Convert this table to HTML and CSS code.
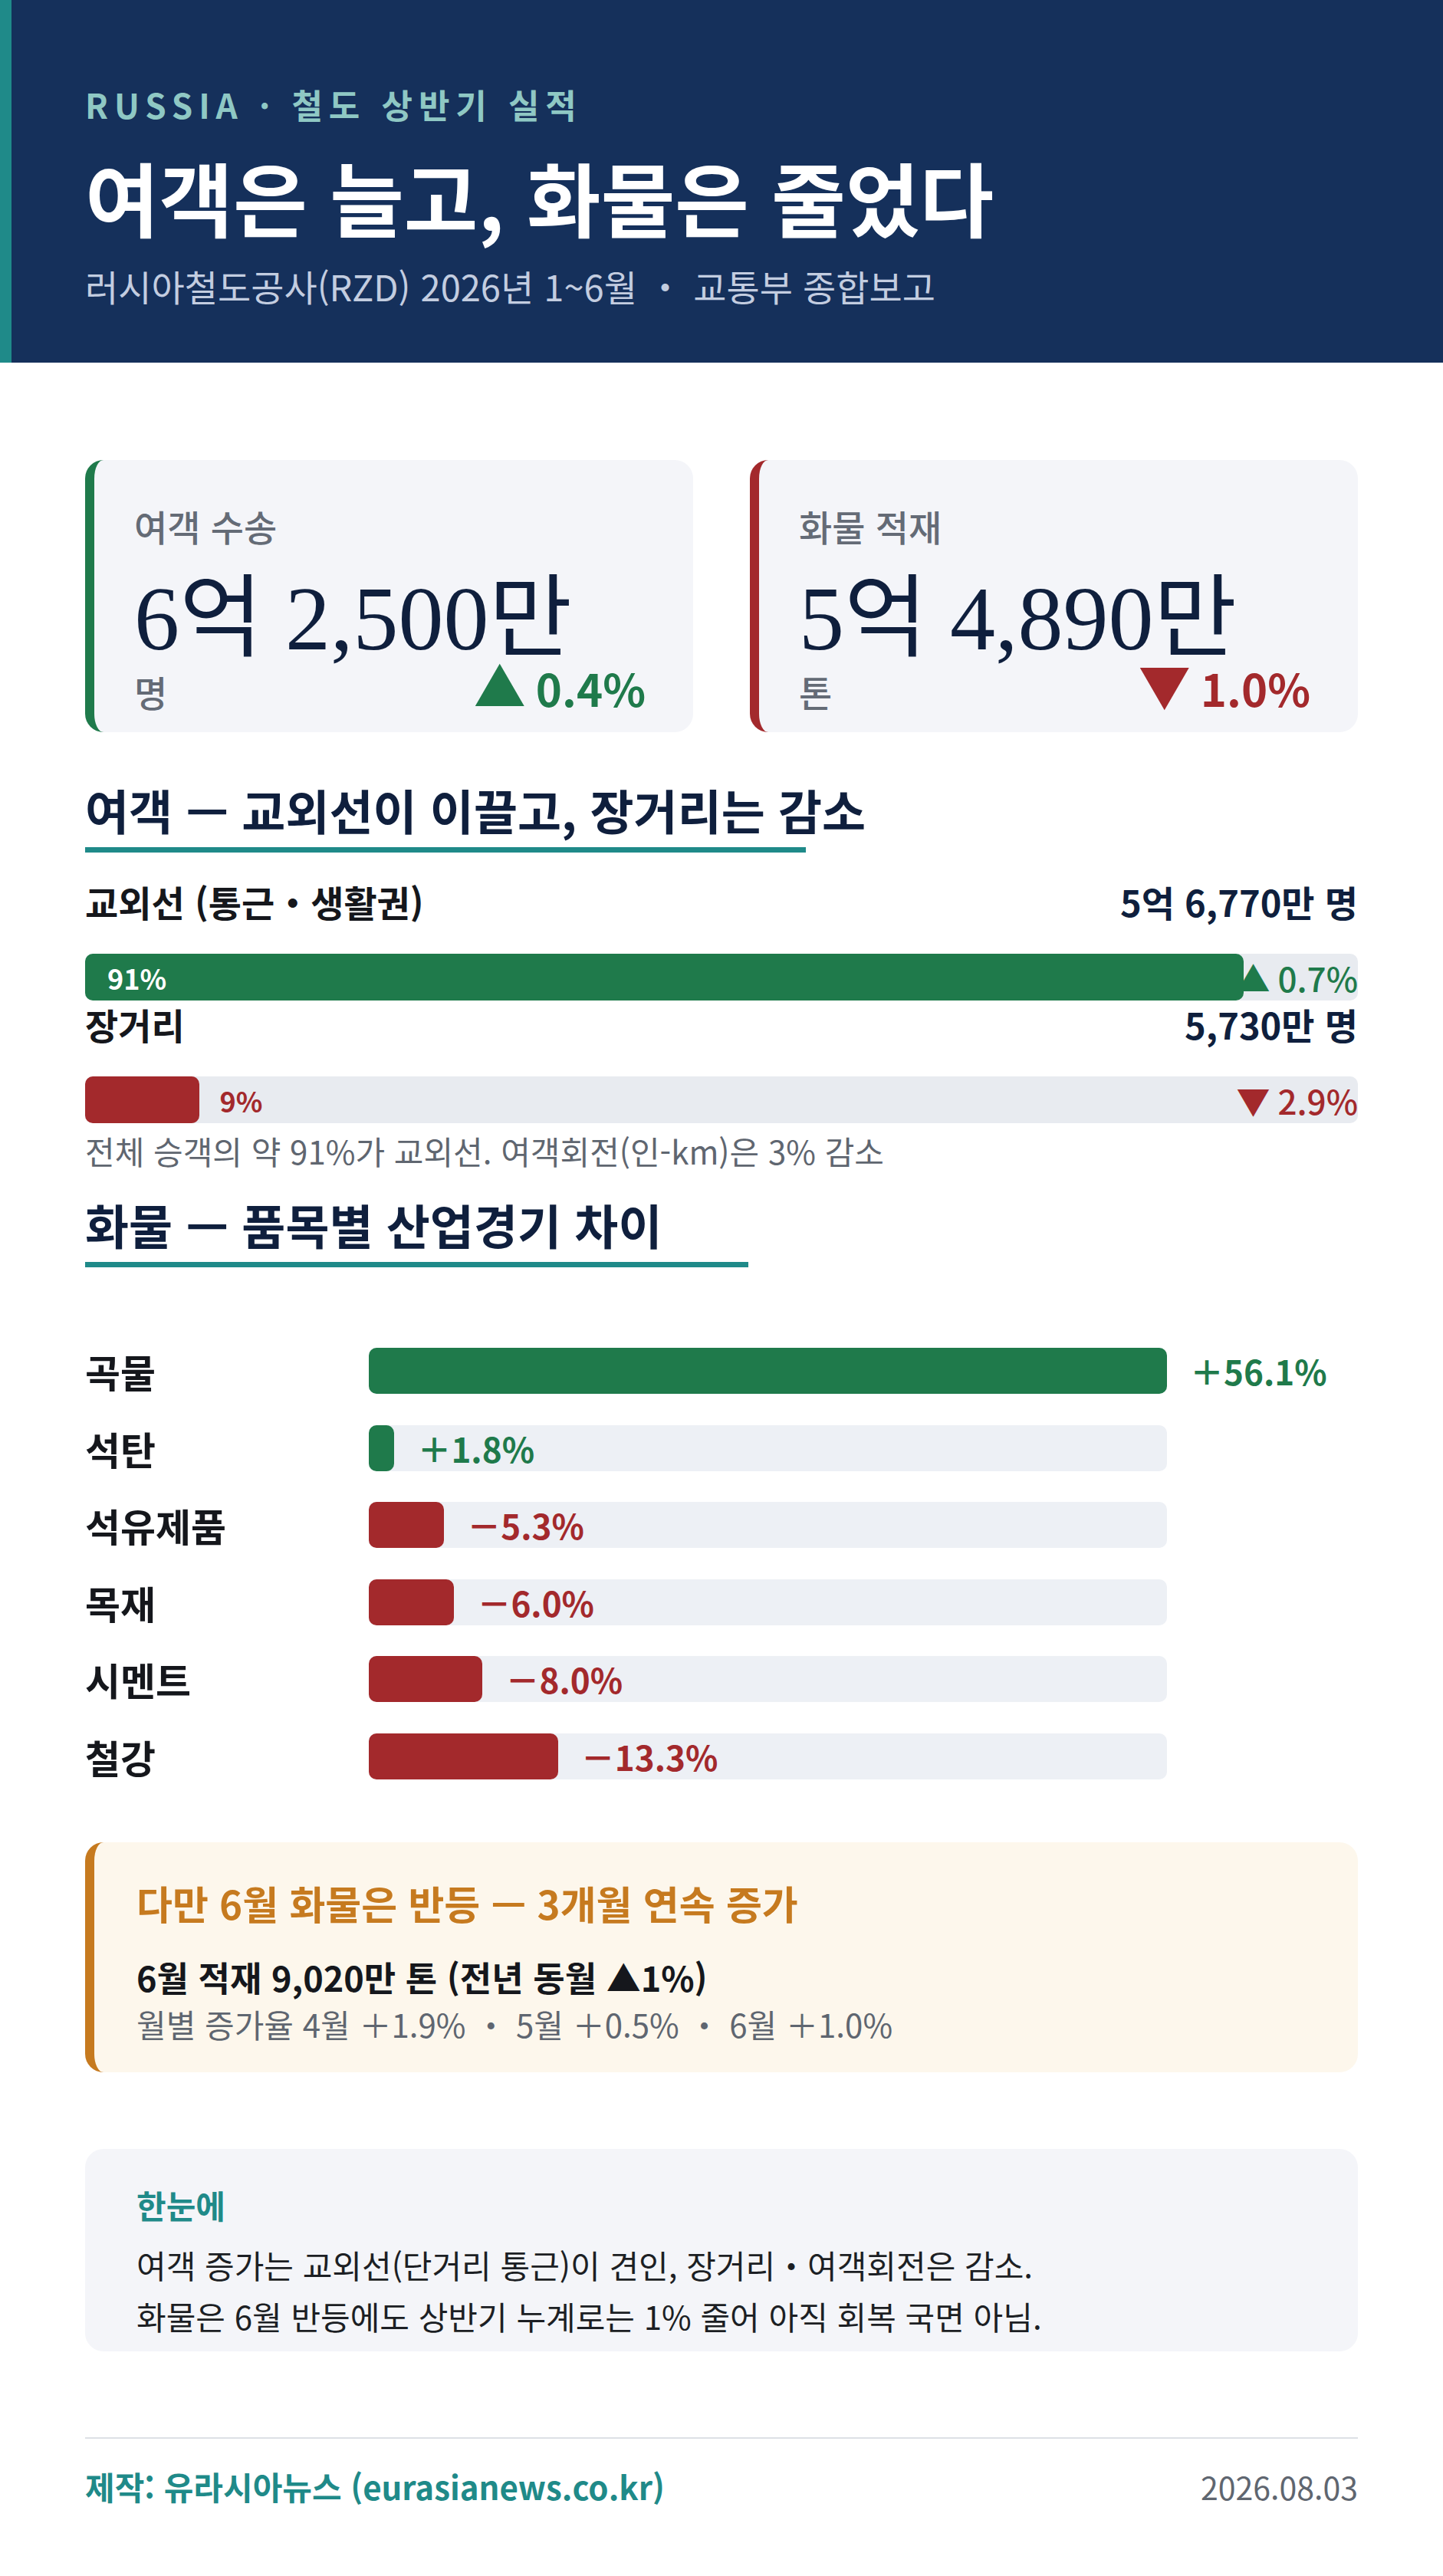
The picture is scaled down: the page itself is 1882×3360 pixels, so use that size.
FILE: index.html
```html
<!DOCTYPE html>
<html lang="ko">
<head>
<meta charset="utf-8">
<title>러시아 철도 상반기 실적</title>
<link rel="stylesheet" href="styles.css">
</head>
<body>
<header class="hero">
  <p class="kicker">RUSSIA · 철도 상반기 실적</p>
  <h1 class="title">여객은 늘고, 화물은 줄었다</h1>
  <p class="subtitle">러시아철도공사(RZD) 2026년 1~6월 <span class="fw">·</span> 교통부 종합보고</p>
</header>

<main class="content">
  <section class="kpis">
    <div class="kpi kpi--up">
      <div class="kpi-label">여객 수송</div>
      <div class="kpi-value">6억 2,500만</div>
      <div class="kpi-foot">
        <span class="kpi-unit">명</span>
        <span class="kpi-change up"><span class="tri">▲</span> 0.4%</span>
      </div>
    </div>
    <div class="kpi kpi--down">
      <div class="kpi-label">화물 적재</div>
      <div class="kpi-value">5억 4,890만</div>
      <div class="kpi-foot">
        <span class="kpi-unit">톤</span>
        <span class="kpi-change down"><span class="tri">▼</span> 1.0%</span>
      </div>
    </div>
  </section>

  <section class="passenger">
    <h2 class="sec-title sec-title--a">여객 — 교외선이 이끌고, 장거리는 감소</h2>
    <div class="share-list">
      <div class="share-row">
        <div class="share-head">
          <span class="share-name">교외선 (통근<span class="fw">·</span>생활권)</span>
          <span class="share-val">5억 6,770만 명</span>
        </div>
        <div class="share-track">
          <div class="share-fill up" style="width:91%"><span class="share-pct-in">91%</span></div>
          <span class="share-chg up">▲ 0.7%</span>
        </div>
      </div>
      <div class="share-row">
        <div class="share-head">
          <span class="share-name">장거리</span>
          <span class="share-val">5,730만 명</span>
        </div>
        <div class="share-track">
          <div class="share-fill down" style="width:9%"></div>
          <span class="share-pct-out">9%</span>
          <span class="share-chg down">▼ 2.9%</span>
        </div>
      </div>
    </div>
    <p class="note">전체 승객의 약 91%가 교외선. 여객회전(인-km)은 3% 감소</p>
  </section>

  <section class="freight-sec">
    <h2 class="sec-title sec-title--b">화물 — 품목별 산업경기 차이</h2>
    <div class="freight">
      <div class="f-label">곡물</div>
      <div class="f-track"><div class="f-fill up" style="width:100%"></div><span class="f-val up"><span class="fw">+</span>56.1%</span></div>

      <div class="f-label">석탄</div>
      <div class="f-track"><div class="f-fill up" style="width:3.21%"></div><span class="f-val up"><span class="fw">+</span>1.8%</span></div>

      <div class="f-label">석유제품</div>
      <div class="f-track"><div class="f-fill down" style="width:9.45%"></div><span class="f-val down"><span class="fw">－</span>5.3%</span></div>

      <div class="f-label">목재</div>
      <div class="f-track"><div class="f-fill down" style="width:10.7%"></div><span class="f-val down"><span class="fw">－</span>6.0%</span></div>

      <div class="f-label">시멘트</div>
      <div class="f-track"><div class="f-fill down" style="width:14.26%"></div><span class="f-val down"><span class="fw">－</span>8.0%</span></div>

      <div class="f-label">철강</div>
      <div class="f-track"><div class="f-fill down" style="width:23.71%"></div><span class="f-val down"><span class="fw">－</span>13.3%</span></div>
    </div>
  </section>

  <aside class="notice">
    <p class="notice-title">다만 6월 화물은 반등 — 3개월 연속 증가</p>
    <p class="notice-main">6월 적재 9,020만 톤 (전년 동월 ▲1%)</p>
    <p class="notice-sub">월별 증가율 4월 <span class="fw">+</span>1.9% <span class="fw">·</span> 5월 <span class="fw">+</span>0.5% <span class="fw">·</span> 6월 <span class="fw">+</span>1.0%</p>
  </aside>

  <section class="summary">
    <p class="summary-title">한눈에</p>
    <p class="summary-text">여객 증가는 교외선(단거리 통근)이 견인, 장거리<span class="fw">·</span>여객회전은 감소.<br>화물은 6월 반등에도 상반기 누계로는 1% 줄어 아직 회복 국면 아님.</p>
  </section>

  <footer class="footer">
    <span class="credit">제작: 유라시아뉴스 (eurasianews.co.kr)</span>
    <span class="date">2026.08.03</span>
  </footer>
</main>
</body>
</html>
```

FILE: styles.css
```css
* { box-sizing: border-box; }

body {
  margin: 0;
  background: #ffffff;
  font-family: "Noto Sans CJK KR", "Noto Sans", sans-serif;
  color: #15171c;
}

p, h1, h2 { margin: 0; }

/* full-width punctuation forms (+, −, ·) as set in Korean typography */
.fw { font-variant-east-asian: full-width; }

/* ---------- header ---------- */
.hero {
  background: #15305b;
  border-left: 15px solid #1f8a89;
  padding: 110px 96px 70px;
}
.kicker {
  font-size: 44px;
  line-height: 53px;
  font-weight: 700;
  letter-spacing: 0.18em;
  color: #8fc8c4;
}
.title {
  margin-top: 32px;
  font-size: 105px;
  line-height: 120px;
  font-weight: 700;
  color: #ffffff;
}
.subtitle {
  margin-top: 28px;
  font-size: 47px;
  line-height: 60px;
  color: #c3cde0;
}

/* ---------- content ---------- */
.content {
  padding: 127px 111px 92px;
}

.up { color: #1f7a4b; }
.down { color: #a3292c; }

/* KPI cards */
.kpis {
  display: grid;
  grid-template-columns: 1fr 1fr;
  gap: 74px;
}
.kpi {
  background: #f4f5f9;
  border-left: 12px solid #1f7a4b;
  border-radius: 24px;
  padding: 57px 62px 25px 52px;
}
.kpi--down { border-left-color: #a3292c; }
.kpi-label {
  font-size: 47px;
  line-height: 57px;
  font-weight: 500;
  color: #646b76;
}
.kpi-value {
  margin-top: 34px;
  font-family: "Liberation Serif", "Noto Sans CJK KR", serif;
  font-size: 118px;
  line-height: 120px;
  color: #0f1f3d;
}
.kpi-foot {
  display: flex;
  justify-content: space-between;
  align-items: baseline;
}
.kpi-unit {
  font-size: 47px;
  line-height: 57px;
  font-weight: 500;
  color: #646b76;
}
.kpi-change {
  font-size: 58px;
  line-height: 50px;
  font-weight: 700;
}
.kpi-change .tri {
  font-size: 68px;
}

/* section titles */
.sec-title {
  margin-top: 64px;
  font-size: 62px;
  line-height: 75px;
  font-weight: 700;
  color: #0f1f3d;
}
.sec-title::after {
  content: "";
  display: block;
  height: 7px;
  margin-top: 11px;
  background: #1f8a89;
}
.sec-title--a::after { width: 940px; }
.sec-title--b { margin-top: 31px; }
.sec-title--b::after { width: 865px; }

/* passenger share bars */
.share-list { margin-top: 33px; }
.share-head {
  display: flex;
  justify-content: space-between;
  font-size: 47px;
  line-height: 61px;
  font-weight: 700;
}
.share-name { color: #15171c; }
.share-val { color: #0f1f3d; }
.share-track {
  position: relative;
  margin-top: 38px;
  height: 61px;
  background: #e8ebf0;
  border-radius: 10px;
  display: flex;
  align-items: center;
}
.share-fill {
  height: 100%;
  border-radius: 10px;
  display: flex;
  align-items: center;
  flex-shrink: 0;
}
.share-fill.up { background: #1f7a4b; }
.share-fill.down { background: #a3292c; }
.share-pct-in {
  padding-left: 29px;
  font-size: 36px;
  font-weight: 700;
  color: #ffffff;
}
.share-pct-out {
  margin-left: 26px;
  font-size: 36px;
  font-weight: 700;
  color: #a3292c;
}
.share-chg {
  position: absolute;
  right: 0;
  top: 50%;
  transform: translateY(-50%);
  font-size: 44px;
  line-height: 1;
  font-weight: 500;
}
.note {
  margin-top: 8px;
  font-size: 42px;
  line-height: 56px;
  color: #5f6670;
}

/* freight chart */
.freight {
  margin-top: 105px;
  display: grid;
  grid-template-columns: 370px 1041px;
  row-gap: 40.6px;
  align-items: center;
}
.f-label {
  font-size: 50px;
  line-height: 60px;
  font-weight: 700;
  color: #15171c;
}
.f-track {
  height: 60px;
  background: #edf0f5;
  border-radius: 10px;
  display: flex;
  align-items: center;
}
.f-fill {
  height: 100%;
  border-radius: 10px;
  flex-shrink: 0;
}
.f-fill.up { background: #1f7a4b; }
.f-fill.down { background: #a3292c; }
.f-val {
  margin-left: 30px;
  font-size: 44px;
  font-weight: 700;
  white-space: nowrap;
}

/* notice */
.notice {
  margin-top: 82px;
  background: #fdf7ec;
  border-left: 12px solid #c67a1f;
  border-radius: 24px;
  padding: 48px 55px 34px;
}
.notice-title {
  font-size: 51px;
  line-height: 62px;
  font-weight: 700;
  color: #c67a1f;
}
.notice-main {
  margin-top: 35px;
  font-size: 45px;
  line-height: 62px;
  font-weight: 700;
  color: #15171c;
}
.notice-sub {
  font-size: 42px;
  line-height: 59px;
  color: #5f6670;
}

/* summary */
.summary {
  margin-top: 100px;
  background: #f4f5f9;
  border-radius: 24px;
  padding: 45px 67px 13px;
}
.summary-title {
  font-size: 42px;
  line-height: 55px;
  font-weight: 700;
  color: #1f8a89;
}
.summary-text {
  margin-top: 17px;
  font-size: 42px;
  line-height: 67px;
  color: #1c1f24;
}

/* footer */
.footer {
  margin-top: 112px;
  border-top: 2px solid #dde0e5;
  padding-top: 34px;
  display: flex;
  justify-content: space-between;
  line-height: 56px;
}
.credit { font-size: 42px; font-weight: 700; color: #1f8a89; }
.date { font-size: 41px; color: #5f6670; }
```
